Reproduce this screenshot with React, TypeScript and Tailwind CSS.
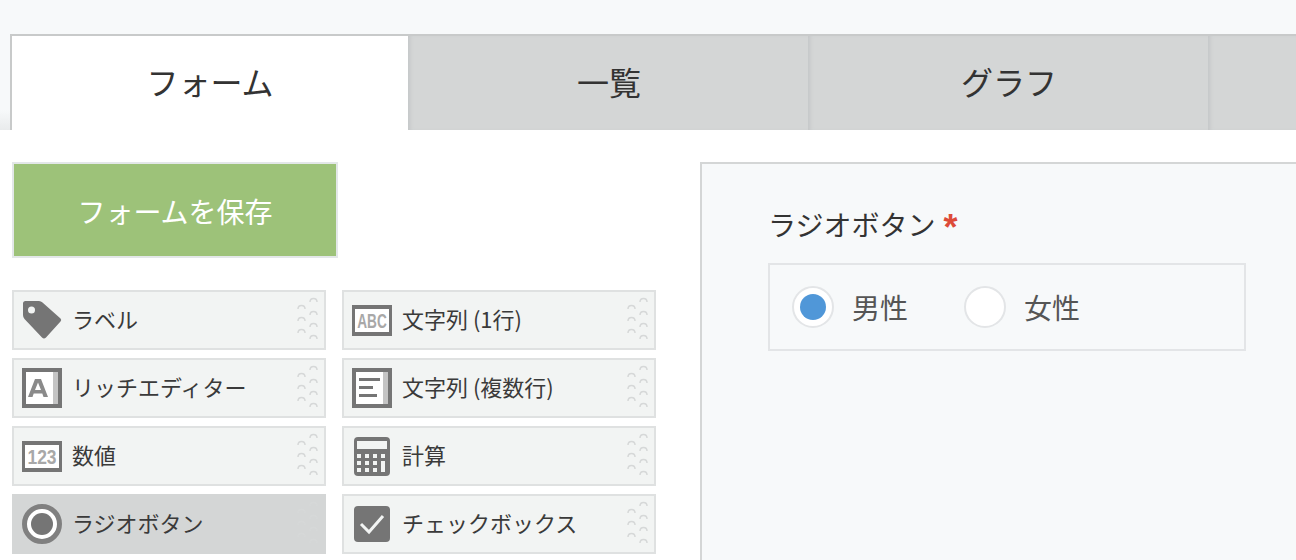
import type { ReactNode } from 'react'

const fontStack = "font-['Noto_Sans_CJK_JP','Liberation_Sans',sans-serif]"

const iconTag = (
  <svg width="40" height="40" viewBox="0 0 40 40">
    <path d="M1 3.500 Q1 1 3.500 1 L17 1 Q19 1 20.500 2.500 L38.500 18.500 Q40 20 38.500 21.500 L24 37.500 Q22 39.500 20 37.500 L2.500 19 Q1 17.500 1 15 Z" fill="#757575" />
    <circle cx="9.500" cy="10" r="3.500" fill="#f2f4f3" />
  </svg>
)

const iconRich = (
  <svg width="40" height="40" viewBox="0 0 40 40">
    <rect x="0" y="0" width="40" height="40" fill="#757575" />
    <rect x="4" y="4" width="32" height="32" fill="#fff" />
    <rect x="31" y="4" width="5" height="32" fill="#c4c4c4" />
    <path d="M6 29 L13 11 L19 11 L26 29 L21.500 29 L20.300 25.500 L11.700 25.500 L10.500 29 Z M13 22 L19 22 L16 14.500 Z" fill="#8a8a8a" fillRule="evenodd" />
  </svg>
)

const iconNumber = (
  <svg width="40" height="40" viewBox="0 0 40 40">
    <rect x="0" y="5" width="40" height="31" fill="#757575" />
    <rect x="3" y="9" width="34" height="23" fill="#fff" />
    <text transform="translate(20 28) scale(0.83 1)" textAnchor="middle" fontSize="21" fontFamily="'Liberation Sans',sans-serif" fontWeight="700" fill="#a8a8a8">123</text>
  </svg>
)

const iconRadio = (
  <svg width="40" height="40" viewBox="0 0 40 40">
    <circle cx="20" cy="20" r="17.500" fill="#fff" stroke="#808080" strokeWidth="5" />
    <circle cx="20" cy="20" r="11" fill="#757575" />
  </svg>
)

const iconAbc = (
  <svg width="40" height="40" viewBox="0 0 40 40">
    <rect x="0" y="5" width="40" height="31" fill="#757575" />
    <rect x="3" y="9" width="34" height="23" fill="#fff" />
    <text transform="translate(20 28) scale(0.65 1)" textAnchor="middle" fontSize="21" fontFamily="'Liberation Sans',sans-serif" fontWeight="700" fill="#a8a8a8">ABC</text>
  </svg>
)

const iconMultiline = (
  <svg width="40" height="40" viewBox="0 0 40 40">
    <rect x="0" y="0" width="40" height="40" fill="#757575" />
    <rect x="4" y="4" width="32" height="32" fill="#fff" />
    <rect x="31" y="4" width="5" height="32" fill="#c4c4c4" />
    <rect x="7" y="10" width="21" height="3" fill="#757575" />
    <rect x="7" y="18" width="14" height="3" fill="#757575" />
    <rect x="7" y="26" width="18" height="3" fill="#757575" />
  </svg>
)

const iconCalc = (
  <svg width="40" height="40" viewBox="0 0 40 40">
    <rect x="2" y="1" width="36" height="39" rx="4" fill="#757575" />
    <rect x="5" y="5" width="30" height="8" fill="#f2f4f3" />
    {[18, 25, 32].map(y =>
      [5, 13, 21].map(x => <rect key={`${x}-${y}`} x={x} y={y} width="4" height="4" fill="#f2f4f3" />),
    )}
    <rect x="29" y="18" width="4" height="4" fill="#f2f4f3" />
    <rect x="29" y="25" width="4" height="11" fill="#f2f4f3" />
  </svg>
)

const iconCheck = (
  <svg width="40" height="40" viewBox="0 0 40 40">
    <rect x="2" y="2" width="36" height="36" rx="4" fill="#757575" />
    <path d="M9 20 L17 28 L31 12" fill="none" stroke="#f2f4f3" strokeWidth="3" />
  </svg>
)

// little stack of arcs at the right of every item
function DragHandle() {
  const left = [17, 29, 41]
  const right = [10, 23, 35, 47]
  const arc = (x: number, y: number) => (
    <path key={`${x}-${y}`} d={`M${x - 3.500} ${y + 2} Q${x - 3.500} ${y - 1.500} ${x} ${y - 1.500} Q${x + 3.500} ${y - 1.500} ${x + 3.500} ${y + 2}`} fill="none" stroke="#d6d8d8" strokeWidth="1.500" />
  )
  return (
    <svg width="26" height="60" viewBox="0 0 26 60" className="shrink-0">
      {left.map(y => arc(7.500, y))}
      {right.map(y => arc(19.500, y))}
    </svg>
  )
}

function PaletteItem({ icon, label, selected }: { icon: ReactNode; label: string; selected?: boolean }) {
  return (
    <div className={`flex h-[60px] items-center border-2 pl-2 pr-[4px] ${selected ? 'border-[#d4d6d6] bg-[#d4d6d6]' : 'border-[#dfe1e1] bg-[#f2f4f3]'}`}>
      <div className="h-10 w-10 shrink-0">{icon}</div>
      <span className="ml-[10px] flex-1 whitespace-nowrap pb-[4px] text-[22px] leading-none text-[#3a3a3a]">{label}</span>
      <DragHandle />
    </div>
  )
}

function Radio({ label, checked }: { label: string; checked?: boolean }) {
  return (
    <div className="flex items-center">
      <div className="flex h-[42px] w-[42px] items-center justify-center rounded-full border-2 border-[#e3e5e7] bg-white">
        {checked && <div className="h-[26px] w-[26px] rounded-full bg-[#5097d8]" />}
      </div>
      <span className="ml-[18px] text-[28px] leading-none text-[#555]">{label}</span>
    </div>
  )
}

const tabs = ['フォーム', '一覧', 'グラフ', '']

export default function App() {
  return (
    <div className={`h-[560px] w-[1296px] overflow-hidden bg-white ${fontStack}`}>
      {/* Tabs */}
      <div className="bg-[linear-gradient(to_bottom,#f7f9fa_110px,#e9ebec_130px)] pl-[10px] pt-[34px]">
        <div className="flex h-[96px] w-[1600px] bg-[#d4d6d6]">
          {tabs.map((tab, i) => (
            <div
              key={i}
              className={
                i === 0
                  ? 'flex w-[398px] shrink-0 items-center justify-center border-l-2 border-t-2 border-[#c8caca] bg-white pb-1 text-[32px] leading-none text-[#333]'
                  : 'flex w-[400px] shrink-0 items-center justify-center border-t-2 border-[#c8caca] pb-1 pl-[2px] text-[32px] leading-none text-[#333] shadow-[inset_4px_0_4px_-2px_#c3c6c7]'
              }
            >
              {tab}
            </div>
          ))}
        </div>
      </div>

      <div className="flex pl-3 pt-8">
        {/* Palette */}
        <div className="w-[644px] shrink-0">
          <div className="flex h-[96px] w-[326px] items-center justify-center border-2 border-[#e3e7e8] bg-[#9dc279] pt-px text-[28px] leading-none text-white">
            フォームを保存
          </div>
          <div className="mt-8 grid grid-cols-[314px_314px] gap-x-4 gap-y-2">
            <PaletteItem icon={iconTag} label="ラベル" />
            <PaletteItem icon={iconAbc} label="文字列 (1行)" />
            <PaletteItem icon={iconRich} label="リッチエディター" />
            <PaletteItem icon={iconMultiline} label="文字列 (複数行)" />
            <PaletteItem icon={iconNumber} label="数値" />
            <PaletteItem icon={iconCalc} label="計算" />
            <PaletteItem icon={iconRadio} label="ラジオボタン" selected />
            <PaletteItem icon={iconCheck} label="チェックボックス" />
          </div>
        </div>

        {/* Preview */}
        <div className="ml-11 h-[500px] flex-1 border-l-2 border-t-2 border-[#d4d6d6] bg-[#f7f9fa] pl-[66px] pt-[42px]">
          <div className="flex h-[40px] items-center pb-[4px] text-[28px] leading-none text-[#333]">
            ラジオボタン
            <span className="ml-[8px] h-[28px] font-['Liberation_Sans',sans-serif] text-[36px] font-bold leading-[36px] text-[#dd4b39]">*</span>
          </div>
          <div className="mt-[17px] flex h-[88px] w-[478px] items-center gap-[56px] border-2 border-[#e3e5e7] pl-[22px]">
            <Radio label="男性" checked />
            <Radio label="女性" />
          </div>
        </div>
      </div>
    </div>
  )
}
